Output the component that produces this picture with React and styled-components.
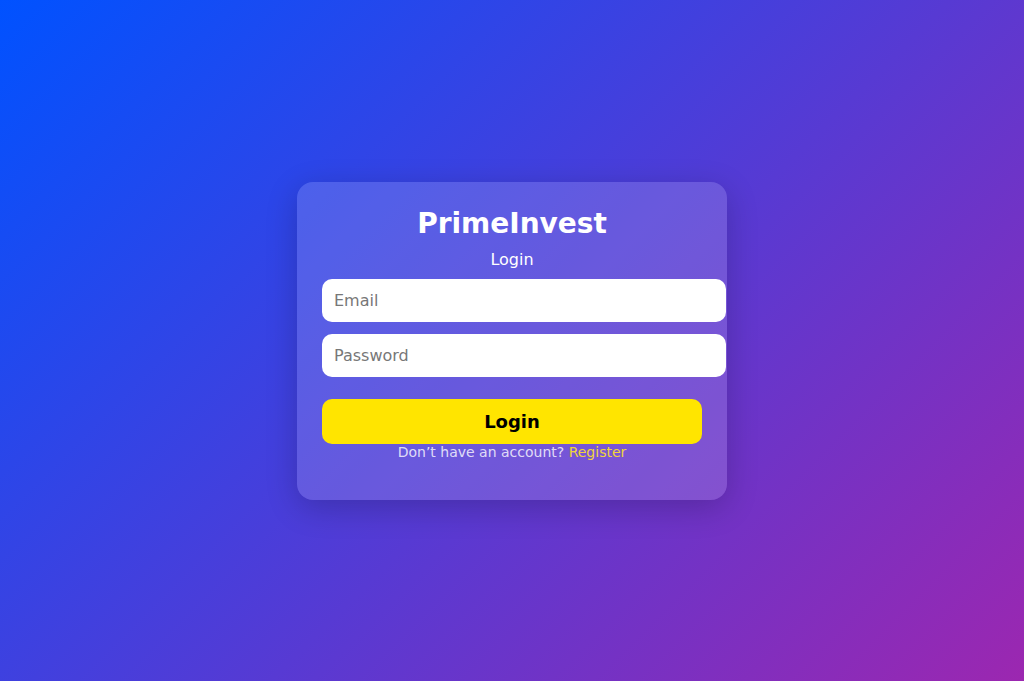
import React from "react"
import styled, { createGlobalStyle } from "styled-components"

const GlobalStyle = createGlobalStyle`
    html, body, #root {
        margin: 0;
        height: 100%;
    }
    body {
        font-family: "DejaVu Sans", sans-serif;
    }
`

const App = () => {
    return (
        <>
            <GlobalStyle />
            <StyledPage>
                <StyledCard>
                    <StyledTitle>PrimeInvest</StyledTitle>
                    <StyledSubtitle>Login</StyledSubtitle>
                    <StyledForm onSubmit={(e) => e.preventDefault()}>
                        <StyledInput type="email" placeholder="Email" />
                        <StyledInput type="password" placeholder="Password" />
                        <StyledButton type="submit">Login</StyledButton>
                    </StyledForm>
                    <StyledFooter>
                        Don’t have an account? <a href="#register">Register</a>
                    </StyledFooter>
                </StyledCard>
            </StyledPage>
        </>
    )
}

const StyledPage = styled.div`
    height: 100vh;
    display: flex;
    justify-content: center;
    align-items: center;
    background: linear-gradient(135deg, #0052ff 0%, #9c27b0 100%);
`

const StyledCard = styled.div`
    width: 380px;
    padding: 25px 25px 40px;
    border-radius: 16px;
    background: rgba(255, 255, 255, 0.15);
    box-shadow: 0 8px 32px rgba(0, 0, 0, 0.2);
    color: white;
    text-align: center;
`

const StyledTitle = styled.h1`
    margin: 0;
    font-size: 28px;
    line-height: 34px;
    font-weight: bold;
`

const StyledSubtitle = styled.p`
    margin: 9px 0 10px;
    font-size: 16px;
    line-height: 19px;
`

const StyledForm = styled.form`
    display: flex;
    flex-direction: column;
    align-items: flex-start;
`

const StyledInput = styled.input`
    width: 100%;
    padding: 12px;
    margin-bottom: 12px;
    border: none;
    border-radius: 10px;
    font-family: inherit;
    font-size: 16px;
    line-height: 19px;
    color: #333;
    background: white;
    outline: none;

    &::placeholder {
        color: #777;
    }
`

const StyledButton = styled.button`
    width: 100%;
    margin-top: 10px;
    padding: 12px;
    border: none;
    border-radius: 10px;
    background: #ffe500;
    color: black;
    font-family: inherit;
    font-size: 18px;
    line-height: 21px;
    font-weight: bold;
    cursor: pointer;
`

const StyledFooter = styled.p`
    margin: 0;
    font-size: 14px;
    line-height: 16px;
    color: rgba(255, 255, 255, 0.8);

    a {
        color: #f0d43c;
        text-decoration: none;
    }
`

export default App
